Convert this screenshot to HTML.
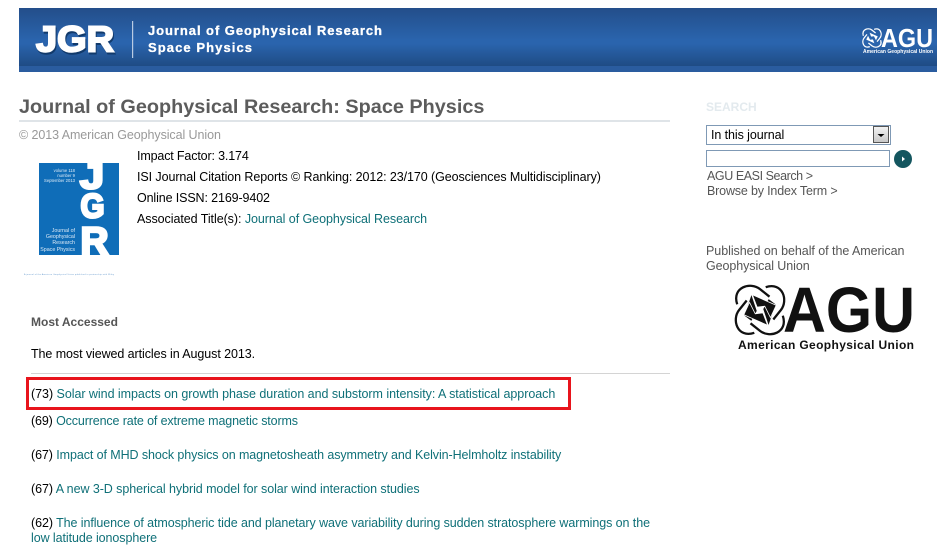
<!DOCTYPE html>
<html><head><meta charset="utf-8"><style>
html,body{margin:0;padding:0;background:#fff}
body{width:937px;height:554px;position:relative;overflow:hidden;font-family:"Liberation Sans",sans-serif;font-size:12.5px;color:#000;letter-spacing:-.08px}
svg{letter-spacing:0}
.t{position:absolute;white-space:nowrap;line-height:16px}
.a{color:#0f7078}
</style></head><body>
<div style="position:absolute;left:19px;top:8px;width:918px;height:64px;background:linear-gradient(#234e8a 0,#2a64ad 50%,#2a64ad 56%,#1f4c85 90%,#1f4c85 91%,#2a5c9f 91%,#2a5c9f 100%)"></div>
<svg style="position:absolute;left:0;top:0" width="937" height="72">
<text x="37" y="53.5" font-family="Liberation Sans" font-weight="700" font-size="36" fill="#123a6b" stroke="#123a6b" stroke-width="2" textLength="78" lengthAdjust="spacingAndGlyphs">JGR</text>
<text x="36" y="51.5" font-family="Liberation Sans" font-weight="700" font-size="36" fill="#fff" stroke="#fff" stroke-width="2" textLength="78" lengthAdjust="spacingAndGlyphs">JGR</text>
<rect x="132" y="21" width="1.2" height="37" fill="#b8cbe3"/>
<text x="148" y="35" font-family="Liberation Sans" font-weight="700" font-size="13" fill="#fff" stroke="#fff" stroke-width=".3" textLength="234" lengthAdjust="spacing">Journal of Geophysical Research</text>
<text x="148" y="52" font-family="Liberation Sans" font-weight="700" font-size="13" fill="#fff" stroke="#fff" stroke-width=".3" textLength="104" lengthAdjust="spacing">Space Physics</text>
<g transform="translate(872 38) scale(.36)">
<g fill="none" stroke="#fff" stroke-width="3.5">
<path d="M-24-6C-30-24-10-30 0-22L10-14"/>
<path d="M-24-6C-30-24-10-30 0-22L10-14" transform="rotate(90)"/>
<path d="M-24-6C-30-24-10-30 0-22L10-14" transform="rotate(180)"/>
<path d="M-24-6C-30-24-10-30 0-22L10-14" transform="rotate(270)"/>
</g>
<g fill="#fff" stroke="#2a64ad" stroke-width="1.5">
<path d="M-8-16L17-5 11 8 5-4-3-3Z"/>
<path d="M-8-16L17-5 11 8 5-4-3-3Z" transform="rotate(180)"/>
</g>
</g>
<text x="881" y="47" font-family="Liberation Sans" font-weight="700" font-size="26" fill="#fff" textLength="52" lengthAdjust="spacingAndGlyphs">AGU</text>
<text x="863" y="53" font-family="Liberation Sans" font-weight="700" font-size="5" fill="#fff" textLength="70">American Geophysical Union</text>
</svg>
<div class="t" style="left:19px;top:95px;font-size:19.85px;line-height:24px;font-weight:700;color:#5c5c5c;letter-spacing:0">Journal of Geophysical Research: Space Physics</div>
<div style="position:absolute;left:19px;top:120px;width:651px;height:2px;background:#dfe4e8"></div>
<div class="t" style="left:19px;top:127px;color:#999">© 2013 American Geophysical Union</div>
<svg style="position:absolute;left:20px;top:160px" width="110" height="125">
<rect x="19" y="3" width="80" height="92" fill="#0f6db8"/>
<g font-family="Liberation Sans" font-weight="700" fill="#fff" stroke="#fff" stroke-width="2.6">
<text x="60" y="28.5" font-size="36" textLength="24" lengthAdjust="spacingAndGlyphs">J</text>
<text x="60.5" y="57.5" font-size="34" textLength="24" lengthAdjust="spacingAndGlyphs">G</text>
<text x="60.5" y="94" font-size="39" textLength="28" lengthAdjust="spacingAndGlyphs">R</text>
</g>
<g font-family="Liberation Sans" fill="#dbe9f6" text-anchor="end">
<text x="55" y="12" font-size="4.2">volume 118</text>
<text x="55" y="17" font-size="4.2">number 9</text>
<text x="55" y="22" font-size="4.2">September 2013</text>
<text x="55" y="72" font-size="5.3">Journal of</text>
<text x="55" y="78" font-size="5.3">Geophysical</text>
<text x="55" y="84" font-size="5.3">Research</text>
<text x="55" y="91" font-size="5.3">Space Physics</text>
</g>
<text x="4" y="115" font-family="Liberation Sans" font-size="2.2" fill="#6f9fd0" textLength="90">A journal of the American Geophysical Union published in partnership with Wiley</text>
</svg>
<div class="t" style="left:137px;top:148px;letter-spacing:-.15px">Impact Factor: 3.174</div>
<div class="t" style="left:137px;top:169px">ISI Journal Citation Reports © Ranking: 2012: 23/170 (Geosciences Multidisciplinary)</div>
<div class="t" style="left:137px;top:190px;letter-spacing:-.12px">Online ISSN: 2169-9402</div>
<div class="t" style="left:137px;top:211px;letter-spacing:-.06px">Associated Title(s): <span class="a">Journal of Geophysical Research</span></div>
<div class="t" style="left:31px;top:314px;font-weight:700;color:#555;font-size:12px;letter-spacing:0">Most Accessed</div>
<div class="t" style="left:31px;top:346px">The most viewed articles in August 2013.</div>
<div style="position:absolute;left:31px;top:373px;width:639px;height:1px;background:#d4d4d4"></div>
<div style="position:absolute;left:26px;top:377px;width:539px;height:27px;border:3px solid #e8141c"></div>
<div class="t" style="left:31px;top:386px;letter-spacing:-.04px">(73) <span class="a">Solar wind impacts on growth phase duration and substorm intensity: A statistical approach</span></div>
<div class="t" style="left:31px;top:413px;letter-spacing:-.13px">(69) <span class="a">Occurrence rate of extreme magnetic storms</span></div>
<div class="t" style="left:31px;top:447px;letter-spacing:-.09px">(67) <span class="a">Impact of MHD shock physics on magnetosheath asymmetry and Kelvin-Helmholtz instability</span></div>
<div class="t" style="left:31px;top:481px;letter-spacing:-.065px">(67) <span class="a">A new 3-D spherical hybrid model for solar wind interaction studies</span></div>
<div class="t" style="left:31px;top:515px">(62) <span class="a">The influence of atmospheric tide and planetary wave variability during sudden stratosphere warmings on the</span></div>
<div class="t a" style="left:31px;top:530px">low latitude ionosphere</div>
<div class="t" style="left:706px;top:99px;font-weight:700;font-size:12px;color:#e3eaee;letter-spacing:0">SEARCH</div>
<div style="position:absolute;left:706px;top:125px;width:183px;height:18px;border:1px solid #7f99b5"></div>
<div class="t" style="left:711px;top:127px">In this journal</div>
<div style="position:absolute;left:873px;top:126px;width:16px;height:17px;border:1px solid #555;box-sizing:border-box;background:linear-gradient(#f2f2f2,#c8c8c8)"></div>
<svg style="position:absolute;left:873px;top:126px" width="16" height="17"><path d="M4.5 8h7L8 11z" fill="#000"/></svg>
<div style="position:absolute;left:706px;top:150px;width:182px;height:15px;border:1px solid #7f99b5"></div>
<div style="position:absolute;left:894px;top:150px;width:18px;height:18px;border-radius:50%;background:#14565f"></div>
<svg style="position:absolute;left:894px;top:150px" width="18" height="18"><path d="M8 6.5l3 2.5-3 2.5z" fill="#fff"/></svg>
<div class="t" style="left:707px;top:168px;color:#555;letter-spacing:-.43px">AGU EASI Search &gt;</div>
<div class="t" style="left:707px;top:183px;color:#555;letter-spacing:-.17px">Browse by Index Term &gt;</div>
<div class="t" style="left:706px;top:243px;color:#555;letter-spacing:-.05px">Published on behalf of the American</div>
<div class="t" style="left:706px;top:258px;color:#555">Geophysical Union</div>
<svg style="position:absolute;left:730px;top:280px" width="207" height="75">
<g transform="translate(30 30) scale(.95)">
<g fill="none" stroke="#111" stroke-width="2.4">
<path d="M-24-6C-30-24-10-30 0-22L10-14"/>
<path d="M-24-6C-30-24-10-30 0-22L10-14" transform="rotate(90)"/>
<path d="M-24-6C-30-24-10-30 0-22L10-14" transform="rotate(180)"/>
<path d="M-24-6C-30-24-10-30 0-22L10-14" transform="rotate(270)"/>
</g>
<g fill="#111" stroke="#fff" stroke-width=".8">
<path d="M-9-17L-17 6-9 12-3 1Z"/>
<path d="M-9-17L-17 6-9 12-3 1Z" transform="rotate(180)"/>
<path d="M-8-16L17-5 11 8 5-4-3-3Z"/>
<path d="M-8-16L17-5 11 8 5-4-3-3Z" transform="rotate(180)"/>
</g>
</g>
<text x="53" y="52" font-family="Liberation Sans" font-weight="700" font-size="64" fill="#111" textLength="132" lengthAdjust="spacingAndGlyphs">AGU</text>
<text x="8" y="69" font-family="Liberation Sans" font-weight="700" font-size="12" fill="#111" textLength="176">American Geophysical Union</text>
</svg>
</body></html>
